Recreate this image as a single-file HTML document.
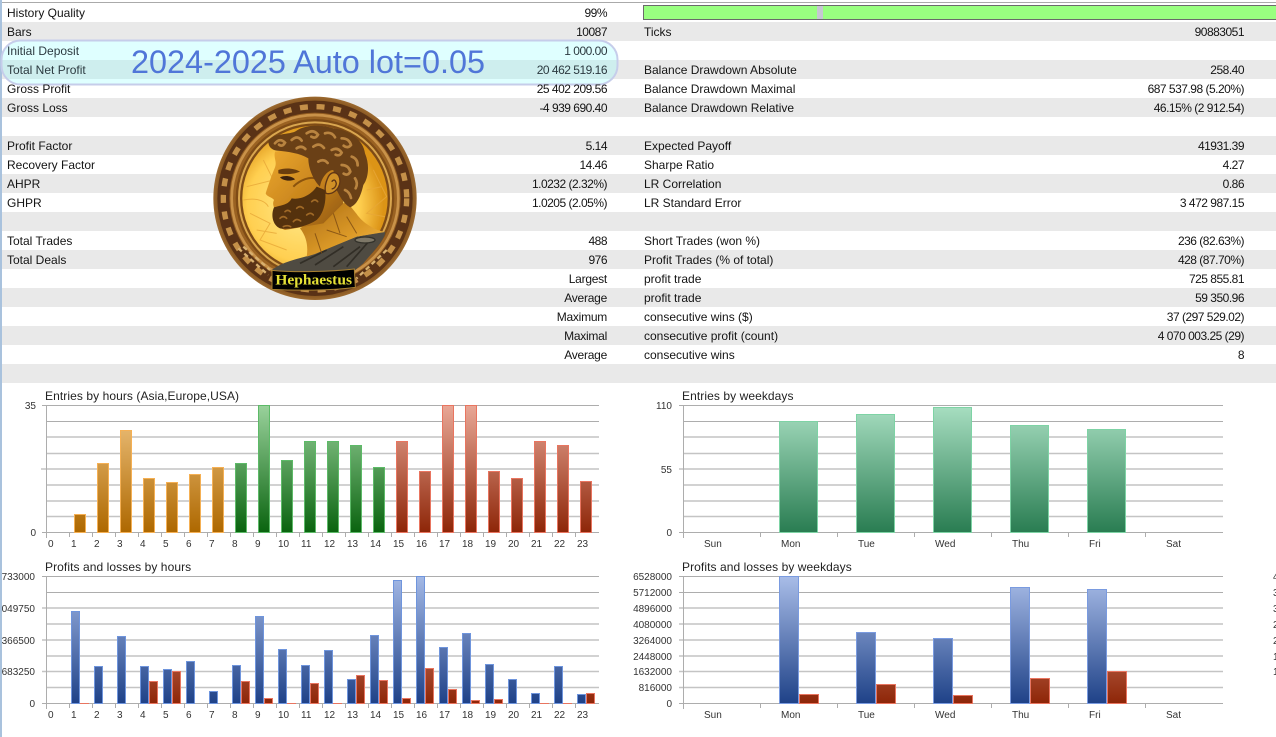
<!DOCTYPE html>
<html lang="en">
<head>
<meta charset="utf-8">
<title>Strategy Report</title>
<style>
html,body{margin:0;padding:0;background:#fff;width:1276px;height:737px;overflow:hidden}
svg{display:block}
text{font-family:"Liberation Sans",Arial,sans-serif}
.t{filter:blur(.25px)}
.t text{font-size:12px;fill:#141414}
.t .e{letter-spacing:-.5px}
.t .l{letter-spacing:-.25px}
.u text{fill:#2c3a40}
.e{text-anchor:end}
.c{filter:blur(.25px)}
.c text{font-size:10px;fill:#333}
.h{font-size:12px;fill:#222;letter-spacing:.08px}
.g1{stroke:#adadad;stroke-width:1}
.g2{stroke:#d2d2d2;stroke-width:2}
.g3{stroke:#c4c4c4;stroke-width:1.5}
.o{fill:url(#go);stroke:#f5b054}
.gr{fill:url(#gg);stroke:#5dba68}
.r{fill:url(#gr);stroke:#e97560}
.w{fill:url(#gw);stroke:#7ed3a5}
.b{fill:url(#gb);stroke:#6f95dd}
.r2{fill:url(#gr2);stroke:#e97560}
.b2{fill:url(#gb2);stroke:#7a9be0}
.r3{fill:url(#gr3);stroke:#e97560}
</style>
</head>
<body>
<svg width="1276" height="737" viewBox="0 0 1276 737" xmlns="http://www.w3.org/2000/svg">
<defs>
<linearGradient id="go" gradientUnits="userSpaceOnUse" x1="0" y1="405" x2="0" y2="532"><stop offset="0" stop-color="#f2c785"/><stop offset="1" stop-color="#ae6800"/></linearGradient>
<linearGradient id="gg" gradientUnits="userSpaceOnUse" x1="0" y1="405" x2="0" y2="532"><stop offset="0" stop-color="#9ad29c"/><stop offset="1" stop-color="#0a640f"/></linearGradient>
<linearGradient id="gr" gradientUnits="userSpaceOnUse" x1="0" y1="405" x2="0" y2="532"><stop offset="0" stop-color="#e9a897"/><stop offset="1" stop-color="#8e2608"/></linearGradient>
<linearGradient id="gw" gradientUnits="userSpaceOnUse" x1="0" y1="405" x2="0" y2="532"><stop offset="0" stop-color="#a9dfc2"/><stop offset="1" stop-color="#2a7d52"/></linearGradient>
<linearGradient id="gb" gradientUnits="userSpaceOnUse" x1="0" y1="576" x2="0" y2="703"><stop offset="0" stop-color="#a4b9e6"/><stop offset="1" stop-color="#1f4288"/></linearGradient>
<linearGradient id="gr2" gradientUnits="userSpaceOnUse" x1="0" y1="576" x2="0" y2="703"><stop offset="0" stop-color="#e9a897"/><stop offset="1" stop-color="#8e2608"/></linearGradient>
<linearGradient id="gb2" gradientUnits="userSpaceOnUse" x1="0" y1="576" x2="0" y2="703"><stop offset="0" stop-color="#a9bde8"/><stop offset="1" stop-color="#1f4288"/></linearGradient>
<linearGradient id="gr3" gradientUnits="userSpaceOnUse" x1="0" y1="576" x2="0" y2="703"><stop offset="0" stop-color="#e9a897"/><stop offset="1" stop-color="#8e2608"/></linearGradient>
<radialGradient id="sun" cx="0.42" cy="0.55" r="0.55"><stop offset="0" stop-color="#ffeb8e"/><stop offset=".7" stop-color="#ffcf50"/><stop offset="1" stop-color="#dc9418"/></radialGradient>
<radialGradient id="rim" cx="0.5" cy="0.5" r="0.5"><stop offset=".8" stop-color="#9a6224"/><stop offset=".93" stop-color="#7d4c1a"/><stop offset="1" stop-color="#9c6a30"/></radialGradient>
<linearGradient id="skin" x1="0" y1="0" x2="1" y2="1"><stop offset="0" stop-color="#eeaa30"/><stop offset=".55" stop-color="#c8841c"/><stop offset="1" stop-color="#8a5210"/></linearGradient>
<linearGradient id="neck" x1="0" y1="0" x2="1" y2="1"><stop offset="0" stop-color="#a86a14"/><stop offset=".6" stop-color="#dc9a28"/><stop offset="1" stop-color="#f2bc4c"/></linearGradient>
<filter id="soft" x="-5%" y="-5%" width="110%" height="110%"><feGaussianBlur stdDeviation="0.5"/></filter>
</defs>

<rect width="1276" height="737" fill="#fff"/>
<rect x="0" y="2" width="1276" height="1" fill="#aaa"/>

<!-- rows -->
<g fill="#e9e9e9">
<rect x="2" y="22" width="1274" height="19"/>
<rect x="2" y="60" width="1274" height="19"/>
<rect x="2" y="98" width="1274" height="19"/>
<rect x="2" y="136" width="1274" height="19"/>
<rect x="2" y="174" width="1274" height="19"/>
<rect x="2" y="212" width="1274" height="19"/>
<rect x="2" y="250" width="1274" height="19"/>
<rect x="2" y="288" width="1274" height="19"/>
<rect x="2" y="326" width="1274" height="19"/>
<rect x="2" y="364" width="1274" height="19"/>
</g>
<rect x="0" y="0" width="2" height="737" fill="#a9c2dd"/>

<!-- quality bar -->
<rect x="643.5" y="5.5" width="640" height="14" fill="#99ff80" stroke="#6a6a6a"/>
<rect x="817" y="6" width="6" height="13" fill="#c6c6d2"/>

<!-- highlight overlay -->
<rect x="1.5" y="40.5" width="616" height="44" rx="19" ry="19" fill="#78ffff" fill-opacity=".24" stroke="#c6cdea" stroke-width="2"/>

<g class="t">
<text x="7" y="17">History Quality</text><text class="e" x="607" y="17">99%</text>
<text x="7" y="36">Bars</text><text class="e" x="607" y="36">10087</text>
<text x="644" y="36">Ticks</text><text class="e" x="1244" y="36">90883051</text>
<g class="u">
<text x="7" y="55">Initial Deposit</text><text class="e" x="607" y="55">1 000.00</text>
<text x="7" y="74">Total Net Profit</text><text class="e" x="607" y="74">20 462 519.16</text>
</g>
<text x="644" y="74">Balance Drawdown Absolute</text><text class="e" x="1244" y="74">258.40</text>
<text x="7" y="93">Gross Profit</text><text class="e" x="607" y="93">25 402 209.56</text>
<text x="644" y="93">Balance Drawdown Maximal</text><text class="e" x="1244" y="93">687 537.98 (5.20%)</text>
<text x="7" y="112">Gross Loss</text><text class="e" x="607" y="112">-4 939 690.40</text>
<text x="644" y="112">Balance Drawdown Relative</text><text class="e" x="1244" y="112">46.15% (2 912.54)</text>
<text x="7" y="150">Profit Factor</text><text class="e" x="607" y="150">5.14</text>
<text x="644" y="150">Expected Payoff</text><text class="e" x="1244" y="150">41931.39</text>
<text x="7" y="169">Recovery Factor</text><text class="e" x="607" y="169">14.46</text>
<text x="644" y="169">Sharpe Ratio</text><text class="e" x="1244" y="169">4.27</text>
<text x="7" y="188">AHPR</text><text class="e" x="607" y="188">1.0232 (2.32%)</text>
<text x="644" y="188">LR Correlation</text><text class="e" x="1244" y="188">0.86</text>
<text x="7" y="207">GHPR</text><text class="e" x="607" y="207">1.0205 (2.05%)</text>
<text x="644" y="207">LR Standard Error</text><text class="e" x="1244" y="207">3 472 987.15</text>
<text x="7" y="245">Total Trades</text><text class="e" x="607" y="245">488</text>
<text x="644" y="245">Short Trades (won %)</text><text class="e" x="1244" y="245">236 (82.63%)</text>
<text x="7" y="264">Total Deals</text><text class="e" x="607" y="264">976</text>
<text x="644" y="264">Profit Trades (% of total)</text><text class="e" x="1244" y="264">428 (87.70%)</text>
<text class="e l" x="607" y="283">Largest</text>
<text x="644" y="283">profit trade</text><text class="e" x="1244" y="283">725 855.81</text>
<text class="e l" x="607" y="302">Average</text>
<text x="644" y="302">profit trade</text><text class="e" x="1244" y="302">59 350.96</text>
<text class="e l" x="607" y="321">Maximum</text>
<text x="644" y="321">consecutive wins ($)</text><text class="e" x="1244" y="321">37 (297 529.02)</text>
<text class="e l" x="607" y="340">Maximal</text>
<text x="644" y="340">consecutive profit (count)</text><text class="e" x="1244" y="340">4 070 003.25 (29)</text>
<text class="e l" x="607" y="359">Average</text>
<text x="644" y="359">consecutive wins</text><text class="e" x="1244" y="359">8</text>
</g>

<text x="131" y="73" font-size="32" fill="#5076d8" textLength="354" lengthAdjust="spacingAndGlyphs">2024-2025 Auto lot=0.05</text>

<!-- medallion -->
<g transform="translate(200 90) scale(.33333)" filter="url(#soft)">
<circle cx="345" cy="325" r="305" fill="url(#rim)"/>
<circle cx="345" cy="325" r="275" fill="none" stroke="#5a3312" stroke-width="36"/>
<circle cx="345" cy="325" r="275" fill="none" stroke="#c4904a" stroke-width="16" stroke-dasharray="24 26"/>
<circle cx="345" cy="325" r="250" fill="none" stroke="#c9924a" stroke-width="8"/>
<circle cx="345" cy="325" r="238" fill="#7e4c14"/>
<circle cx="345" cy="325" r="228" fill="none" stroke="#d9a650" stroke-width="6"/>
<circle cx="345" cy="325" r="218" fill="url(#sun)"/>
<g fill="none" stroke="#e8a838" stroke-width="3" opacity=".8">
<path d="M140 290 L220 270 L190 210"/><path d="M150 370 L210 400 L180 450 L260 480"/>
<path d="M520 240 L560 320 L500 370 L555 380"/><path d="M130 330 C180 320 200 340 205 350"/>
<path d="M170 420 L230 430"/><path d="M500 300 L545 290"/>
</g>
<!-- cloth base -->
<path d="M215 540 C255 510 310 505 345 490 L470 440 L555 425 C560 445 510 495 490 520 L460 545 L400 570 L240 570 Z" fill="#4f4b42"/>
<path d="M345 525 L430 470 M400 530 L480 470 M300 520 L380 480 M440 530 L510 450" stroke="#302d27" stroke-width="5" fill="none"/>
<ellipse cx="495" cy="450" rx="30" ry="9" fill="#7e7868" stroke="#33302a" stroke-width="4"/>
<!-- neck -->
<path d="M300 415 L375 370 L440 335 L470 372 C485 395 520 420 555 426 L470 440 L345 492 L320 500 C325 470 320 440 300 415 Z" fill="url(#neck)"/>
<path d="M400 370 L420 430 M345 430 L365 490 M440 380 L470 430 M380 420 L440 440" stroke="#7a4a10" stroke-width="3" fill="none" opacity=".8"/>
<!-- face -->
<path d="M225 185 C220 205 232 215 225 232 C215 255 205 285 197 310 C200 320 218 322 222 330 C215 345 225 350 222 362 C215 385 225 410 255 420 L370 400 L430 340 L410 230 L330 170 Z" fill="url(#skin)"/>
<path d="M235 240 C255 232 285 235 300 245 C285 252 255 255 235 250 Z" fill="#6a3c0c"/>
<path d="M240 262 C255 255 275 258 285 268 C268 275 250 272 240 262 Z" fill="#3e2208"/>
<path d="M280 290 C300 270 330 260 345 265" stroke="#8a5210" stroke-width="6" fill="none"/>
<!-- beard -->
<path d="M222 352 C245 345 265 345 275 325 C295 330 330 320 350 290 L375 300 C380 330 372 370 350 390 C320 410 270 420 240 415 C218 405 212 375 222 352 Z" fill="#55300f"/>
<g fill="none" stroke="#a06a28" stroke-width="5" stroke-linecap="round"><path d="M240 385 q10 -10 20 0"/><path d="M280 395 q10 -12 22 -2"/><path d="M320 375 q12 -10 20 0"/><path d="M290 355 q10 -10 20 0"/><path d="M335 335 q10 -10 18 0"/><path d="M250 410 q12 -6 22 0"/><path d="M255 365 q8 -8 16 0"/></g>
<!-- hair -->
<path d="M205 155 C215 130 260 135 285 125 C320 100 370 105 400 115 C450 120 490 150 495 190 C510 225 505 265 490 285 C482 320 470 345 450 352 C430 340 420 320 410 300 L400 240 C385 240 365 260 360 290 C340 270 325 235 325 205 C300 190 265 185 230 182 C215 180 205 170 205 155 Z" fill="#6a3f16"/>
<g fill="none" stroke="#b98440" stroke-width="8" stroke-linecap="round">
<path d="M225 160 q15 -18 30 -2 q-8 14 -18 6"/><path d="M275 150 q18 -16 30 2"/><path d="M320 130 q20 -14 34 4 q-8 14 -20 6"/><path d="M375 130 q20 -6 30 12"/><path d="M425 145 q22 0 28 20 q-10 12 -22 2"/><path d="M340 170 q18 -14 32 4"/><path d="M395 180 q18 -10 30 8 q-6 12 -18 6"/><path d="M455 200 q18 6 18 26"/><path d="M355 215 q16 -10 28 4"/><path d="M425 225 q20 0 26 20 q-8 14 -20 6"/><path d="M465 265 q10 14 2 30"/><path d="M435 300 q14 6 18 24"/><path d="M290 175 q14 -10 26 2"/></g>
<!-- ear -->
<path d="M385 260 C395 240 420 245 420 275 C418 300 395 315 378 310 C372 295 378 275 385 260 Z" fill="#d09028" stroke="#5e3512" stroke-width="4"/>
<path d="M395 275 q10 -12 14 6 q-2 14 -14 16" fill="none" stroke="#5e3512" stroke-width="4"/>
<!-- lower laurel -->
<path d="M115 475 L205 555 M130 470 L210 540 M560 480 L470 565" stroke="#d8b070" stroke-width="7" stroke-dasharray="14 10" fill="none"/>
<!-- banner -->
<path d="M216 541 C290 548 390 545 463 537 L466 592 C390 602 290 602 216 598 Z" fill="#050505" stroke="#a88030" stroke-width="3"/>
<text x="226" y="583" font-size="45" font-weight="700" fill="#e4e036" textLength="230" lengthAdjust="spacingAndGlyphs" style="font-family:'Liberation Serif',serif">Hephaestus</text>
</g>

<!-- Chart 1 -->
<text class="h" x="45" y="400">Entries by hours (Asia,Europe,USA)</text>
<g>
<line class="g1" x1="42" x2="599" y1="405.5" y2="405.5"/><line class="g1" x1="46" x2="599" y1="421.5" y2="421.5"/>
<line class="g2" x1="46" x2="599" y1="437" y2="437"/><line class="g3" x1="46" x2="599" y1="453.5" y2="453.5"/>
<line class="g2" x1="41" x2="599" y1="469" y2="469"/><line class="g2" x1="46" x2="599" y1="485" y2="485"/>
<line class="g3" x1="46" x2="599" y1="501" y2="501"/><line class="g3" x1="46" x2="599" y1="516.5" y2="516.5"/>
<line class="g1" x1="42" x2="599" y1="532.5" y2="532.5"/>
<line class="g1" x1="46.5" x2="46.5" y1="405" y2="538"/>
<path d="M69.5 532v5M92.5 532v5M115.5 532v5M138.5 532v5M161.5 532v5M184.5 532v5M207.5 532v5M230.5 532v5M253.5 532v5M276.5 532v5M299.5 532v5M322.5 532v5M345.5 532v5M368.5 532v5M391.5 532v5M414.5 532v5M437.5 532v5M460.5 532v5M483.5 532v5M506.5 532v5M529.5 532v5M552.5 532v5M575.5 532v5" stroke="#adadad" fill="none"/>
</g>
<g>
<rect class="o" x="74.5" y="514.5" width="11" height="18"/><rect class="o" x="97.5" y="463.5" width="11" height="69"/><rect class="o" x="120.5" y="430.5" width="11" height="102"/><rect class="o" x="143.5" y="478.5" width="11" height="54"/><rect class="o" x="166.5" y="482.5" width="11" height="50"/><rect class="o" x="189.5" y="474.5" width="11" height="58"/><rect class="o" x="212.5" y="467.5" width="11" height="65"/>
<rect class="gr" x="235.5" y="463.5" width="11" height="69"/><rect class="gr" x="258.5" y="405.5" width="11" height="127"/><rect class="gr" x="281.5" y="460.5" width="11" height="72"/><rect class="gr" x="304.5" y="441.5" width="11" height="91"/><rect class="gr" x="327.5" y="441.5" width="11" height="91"/><rect class="gr" x="350.5" y="445.5" width="11" height="87"/><rect class="gr" x="373.5" y="467.5" width="11" height="65"/>
<rect class="r" x="396.5" y="441.5" width="11" height="91"/><rect class="r" x="419.5" y="471.5" width="11" height="61"/><rect class="r" x="442.5" y="405.5" width="11" height="127"/><rect class="r" x="465.5" y="405.5" width="11" height="127"/><rect class="r" x="488.5" y="471.5" width="11" height="61"/><rect class="r" x="511.5" y="478.5" width="11" height="54"/><rect class="r" x="534.5" y="441.5" width="11" height="91"/><rect class="r" x="557.5" y="445.5" width="11" height="87"/><rect class="r" x="580.5" y="481.5" width="11" height="51"/>
</g>
<g class="c">
<text class="e" x="36" y="409">35</text><text class="e" x="36" y="536">0</text>
<text x="48" y="547">0</text><text x="71" y="547">1</text><text x="94" y="547">2</text><text x="117" y="547">3</text><text x="140" y="547">4</text><text x="163" y="547">5</text><text x="186" y="547">6</text><text x="209" y="547">7</text><text x="232" y="547">8</text><text x="255" y="547">9</text><text x="278" y="547">10</text><text x="301" y="547">11</text><text x="324" y="547">12</text><text x="347" y="547">13</text><text x="370" y="547">14</text><text x="393" y="547">15</text><text x="416" y="547">16</text><text x="439" y="547">17</text><text x="462" y="547">18</text><text x="485" y="547">19</text><text x="508" y="547">20</text><text x="531" y="547">21</text><text x="554" y="547">22</text><text x="577" y="547">23</text>
</g>

<!-- Chart 2 -->
<text class="h" x="682" y="400">Entries by weekdays</text>
<g>
<line class="g1" x1="679" x2="1223" y1="405.5" y2="405.5"/><line class="g1" x1="683" x2="1223" y1="421.5" y2="421.5"/>
<line class="g2" x1="683" x2="1223" y1="437" y2="437"/><line class="g3" x1="683" x2="1223" y1="453.5" y2="453.5"/>
<line class="g2" x1="679" x2="1223" y1="469" y2="469"/><line class="g2" x1="683" x2="1223" y1="485" y2="485"/>
<line class="g3" x1="683" x2="1223" y1="501" y2="501"/><line class="g3" x1="683" x2="1223" y1="516.5" y2="516.5"/>
<line class="g1" x1="679" x2="1223" y1="532.5" y2="532.5"/>
<line class="g1" x1="683.5" x2="683.5" y1="405" y2="538"/>
<path d="M760.5 532v5M837.5 532v5M914.5 532v5M991.5 532v5M1068.5 532v5M1145.5 532v5" stroke="#adadad" fill="none"/>
</g>
<rect class="w" x="779.5" y="421.5" width="38" height="111"/><rect class="w" x="856.5" y="414.5" width="38" height="118"/><rect class="w" x="933.5" y="407.5" width="38" height="125"/><rect class="w" x="1010.5" y="425.5" width="38" height="107"/><rect class="w" x="1087.5" y="429.5" width="38" height="103"/>
<g class="c">
<text class="e" x="672" y="409">110</text><text class="e" x="672" y="473">55</text><text class="e" x="672" y="536">0</text>
<text x="704" y="547">Sun</text><text x="781" y="547">Mon</text><text x="858" y="547">Tue</text><text x="935" y="547">Wed</text><text x="1012" y="547">Thu</text><text x="1089" y="547">Fri</text><text x="1166" y="547">Sat</text>
</g>

<!-- Chart 3 -->
<text class="h" x="45" y="571">Profits and losses by hours</text>
<g>
<line class="g1" x1="42" x2="599" y1="576.5" y2="576.5"/><line class="g1" x1="46" x2="599" y1="592.5" y2="592.5"/>
<line class="g2" x1="42" x2="599" y1="608" y2="608"/><line class="g2" x1="46" x2="599" y1="624" y2="624"/>
<line class="g2" x1="42" x2="599" y1="640" y2="640"/><line class="g2" x1="46" x2="599" y1="656" y2="656"/>
<line class="g3" x1="42" x2="599" y1="671.5" y2="671.5"/><line class="g3" x1="46" x2="599" y1="687.5" y2="687.5"/>
<line class="g1" x1="42" x2="599" y1="703.5" y2="703.5"/>
<line class="g1" x1="46.5" x2="46.5" y1="576" y2="709"/>
<path d="M69.5 703v5M92.5 703v5M115.5 703v5M138.5 703v5M161.5 703v5M184.5 703v5M207.5 703v5M230.5 703v5M253.5 703v5M276.5 703v5M299.5 703v5M322.5 703v5M345.5 703v5M368.5 703v5M391.5 703v5M414.5 703v5M437.5 703v5M460.5 703v5M483.5 703v5M506.5 703v5M529.5 703v5M552.5 703v5M575.5 703v5" stroke="#adadad" fill="none"/>
</g>
<g>
<rect class="b" x="71.5" y="611.5" width="8" height="92"/><rect class="b" x="94.5" y="666.5" width="8" height="37"/><rect class="b" x="117.5" y="636.5" width="8" height="67"/><rect class="b" x="140.5" y="666.5" width="8" height="37"/><rect class="b" x="163.5" y="669.5" width="8" height="34"/><rect class="b" x="186.5" y="661.5" width="8" height="42"/><rect class="b" x="209.5" y="691.5" width="8" height="12"/><rect class="b" x="232.5" y="665.5" width="8" height="38"/><rect class="b" x="255.5" y="616.5" width="8" height="87"/><rect class="b" x="278.5" y="649.5" width="8" height="54"/><rect class="b" x="301.5" y="665.5" width="8" height="38"/><rect class="b" x="324.5" y="650.5" width="8" height="53"/><rect class="b" x="347.5" y="679.5" width="8" height="24"/><rect class="b" x="370.5" y="635.5" width="8" height="68"/><rect class="b" x="393.5" y="580.5" width="8" height="123"/><rect class="b" x="416.5" y="576.5" width="8" height="127"/><rect class="b" x="439.5" y="647.5" width="8" height="56"/><rect class="b" x="462.5" y="633.5" width="8" height="70"/><rect class="b" x="485.5" y="664.5" width="8" height="39"/><rect class="b" x="508.5" y="679.5" width="8" height="24"/><rect class="b" x="531.5" y="693.5" width="8" height="10"/><rect class="b" x="554.5" y="666.5" width="8" height="37"/><rect class="b" x="577.5" y="694.5" width="8" height="9"/>
<rect class="r2" x="149.5" y="681.5" width="8" height="22"/><rect class="r2" x="172.5" y="671.5" width="8" height="32"/><rect class="r2" x="241.5" y="681.5" width="8" height="22"/><rect class="r2" x="264.5" y="698.5" width="8" height="5"/><rect class="r2" x="310.5" y="683.5" width="8" height="20"/><rect class="r2" x="356.5" y="675.5" width="8" height="28"/><rect class="r2" x="379.5" y="680.5" width="8" height="23"/><rect class="r2" x="402.5" y="698.5" width="8" height="5"/><rect class="r2" x="425.5" y="668.5" width="8" height="35"/><rect class="r2" x="448.5" y="689.5" width="8" height="14"/><rect class="r2" x="471.5" y="700.5" width="8" height="3"/><rect class="r2" x="494.5" y="699.5" width="8" height="4"/><rect class="r2" x="586.5" y="693.5" width="8" height="10"/>
<path d="M80 703.5h9M287 703.5h9M333 703.5h9M540 703.5h9M563 703.5h9" stroke="#e97560" fill="none"/>
</g>
<g class="c">
<text class="e" x="35" y="580">733000</text><text class="e" x="35" y="612">049750</text><text class="e" x="35" y="644">366500</text><text class="e" x="35" y="675">683250</text><text class="e" x="35" y="707">0</text>
<text x="48" y="718">0</text><text x="71" y="718">1</text><text x="94" y="718">2</text><text x="117" y="718">3</text><text x="140" y="718">4</text><text x="163" y="718">5</text><text x="186" y="718">6</text><text x="209" y="718">7</text><text x="232" y="718">8</text><text x="255" y="718">9</text><text x="278" y="718">10</text><text x="301" y="718">11</text><text x="324" y="718">12</text><text x="347" y="718">13</text><text x="370" y="718">14</text><text x="393" y="718">15</text><text x="416" y="718">16</text><text x="439" y="718">17</text><text x="462" y="718">18</text><text x="485" y="718">19</text><text x="508" y="718">20</text><text x="531" y="718">21</text><text x="554" y="718">22</text><text x="577" y="718">23</text>
</g>

<!-- Chart 4 -->
<text class="h" x="682" y="571">Profits and losses by weekdays</text>
<g>
<line class="g1" x1="679" x2="1223" y1="576.5" y2="576.5"/><line class="g1" x1="679" x2="1223" y1="592.5" y2="592.5"/>
<line class="g2" x1="679" x2="1223" y1="608" y2="608"/><line class="g2" x1="679" x2="1223" y1="624" y2="624"/>
<line class="g2" x1="679" x2="1223" y1="640" y2="640"/><line class="g2" x1="679" x2="1223" y1="656" y2="656"/>
<line class="g3" x1="679" x2="1223" y1="671.5" y2="671.5"/><line class="g3" x1="679" x2="1223" y1="687.5" y2="687.5"/>
<line class="g1" x1="679" x2="1223" y1="703.5" y2="703.5"/>
<line class="g1" x1="683.5" x2="683.5" y1="576" y2="709"/>
<path d="M760.5 703v5M837.5 703v5M914.5 703v5M991.5 703v5M1068.5 703v5M1145.5 703v5" stroke="#adadad" fill="none"/>
</g>
<rect class="b2" x="779.5" y="576.5" width="19" height="127"/><rect class="r3" x="799.5" y="694.5" width="19" height="9"/>
<rect class="b2" x="856.5" y="632.5" width="19" height="71"/><rect class="r3" x="876.5" y="684.5" width="19" height="19"/>
<rect class="b2" x="933.5" y="638.5" width="19" height="65"/><rect class="r3" x="953.5" y="695.5" width="19" height="8"/>
<rect class="b2" x="1010.5" y="587.5" width="19" height="116"/><rect class="r3" x="1030.5" y="678.5" width="19" height="25"/>
<rect class="b2" x="1087.5" y="589.5" width="19" height="114"/><rect class="r3" x="1107.5" y="671.5" width="19" height="32"/>
<g class="c">
<text class="e" x="672" y="580">6528000</text><text class="e" x="672" y="596">5712000</text><text class="e" x="672" y="612">4896000</text><text class="e" x="672" y="628">4080000</text><text class="e" x="672" y="644">3264000</text><text class="e" x="672" y="660">2448000</text><text class="e" x="672" y="675">1632000</text><text class="e" x="672" y="691">816000</text><text class="e" x="672" y="707">0</text>
<text x="704" y="718">Sun</text><text x="781" y="718">Mon</text><text x="858" y="718">Tue</text><text x="935" y="718">Wed</text><text x="1012" y="718">Thu</text><text x="1089" y="718">Fri</text><text x="1166" y="718">Sat</text>
<text x="1273" y="580">4</text><text x="1273" y="596">3</text><text x="1273" y="612">3</text><text x="1273" y="628">2</text><text x="1273" y="644">2</text><text x="1273" y="660">1</text><text x="1273" y="675">1</text>
</g>
</svg>
</body>
</html>
